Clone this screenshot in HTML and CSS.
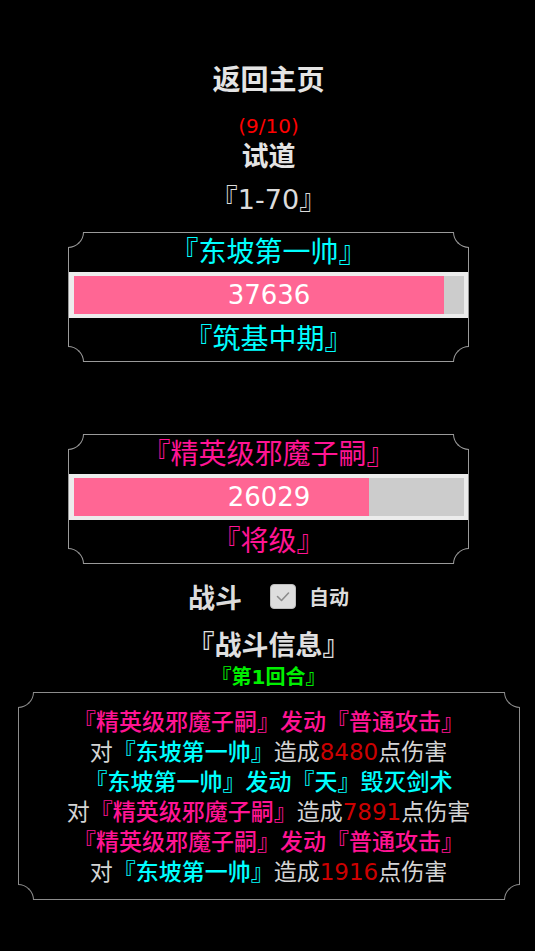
FILE: index.html
```html
<!DOCTYPE html>
<html lang="zh-CN">
<head>
<meta charset="utf-8">
<title>试道</title>
<link rel="stylesheet" href="styles.css">
</head>
<body>
<div class="page">
  <div class="home">返回主页</div>
  <div class="count">(9/10)</div>
  <div class="stage">试道</div>
  <div class="range">『1-70』</div>

  <div class="card cyan">
    <span class="cn tl"></span><span class="cn tr"></span><span class="cn bl"></span><span class="cn br"></span>
    <div class="card-name">『东坡第一帅』</div>
    <div class="strip">
      <div class="track">
        <div class="fill" style="width:94.9%"></div>
        <span class="hp">37636</span>
      </div>
    </div>
    <div class="card-rank">『筑基中期』</div>
  </div>

  <div class="card pink card-enemy">
    <span class="cn tl"></span><span class="cn tr"></span><span class="cn bl"></span><span class="cn br"></span>
    <div class="card-name">『精英级邪魔子嗣』</div>
    <div class="strip">
      <div class="track">
        <div class="fill" style="width:75.6%"></div>
        <span class="hp">26029</span>
      </div>
    </div>
    <div class="card-rank">『将级』</div>
  </div>

  <div class="battle">
    <span class="battle-label">战斗</span>
    <span class="chk">
      <svg viewBox="0 0 26 25" width="26" height="25"><path d="M7.5 12.5 L11.5 16.5 L18.5 9" fill="none" stroke="#8c8c8c" stroke-width="1.6" stroke-linecap="round" stroke-linejoin="round"/></svg>
    </span>
    <span class="auto">自动</span>
  </div>

  <div class="info-title">『战斗信息』</div>
  <div class="round">『第1回合』</div>

  <div class="log">
    <span class="cn tl"></span><span class="cn tr"></span><span class="cn bl"></span><span class="cn br"></span>
    <div class="line"><span class="pk">『精英级邪魔子嗣』发动『普通攻击』</span></div>
    <div class="line">对<span class="cy">『东坡第一帅』</span>造成<span class="rd">8480</span>点伤害</div>
    <div class="line"><span class="cy">『东坡第一帅』发动『天』毁灭剑术</span></div>
    <div class="line">对<span class="pk">『精英级邪魔子嗣』</span>造成<span class="rd">7891</span>点伤害</div>
    <div class="line"><span class="pk">『精英级邪魔子嗣』发动『普通攻击』</span></div>
    <div class="line">对<span class="cy">『东坡第一帅』</span>造成<span class="rd">1916</span>点伤害</div>
  </div>
</div>
</body>
</html>
```

FILE: styles.css
```css
html, body {
  margin: 0;
  padding: 0;
  background: #000;
}

body {
  font-family: "DejaVu Sans", "Noto Sans CJK SC", sans-serif;
  color: #d8d8d8;
}

.page {
  padding: 61px 0 0 2px;
  text-align: center;
}

.home {
  height: 40px;
  line-height: 40px;
  font-size: 28px;
  font-weight: bold;
  color: #e4e4e4;
}

.count {
  margin-top: 12px;
  height: 26px;
  line-height: 26px;
  font-size: 20px;
  color: #ff0000;
}

.stage {
  height: 36px;
  line-height: 36px;
  font-size: 27px;
  font-weight: bold;
  color: #e4e4e4;
}

.range {
  margin-top: 7px;
  height: 36px;
  line-height: 36px;
  font-size: 27px;
  color: #dcdcdc;
}

/* cards */
.card {
  position: relative;
  width: 401px;
  box-sizing: border-box;
  margin: 14px auto 0;
  border: 1px solid #9a9a9a;
}

.card-enemy {
  margin-top: 72px;
}

.cyan { color: #00ffff; }
.pink { color: #ff1493; }

.card-name {
  height: 39px;
  line-height: 39px;
  font-size: 28px;
}

.card-rank {
  height: 43px;
  line-height: 43px;
  font-size: 28px;
}

.strip {
  background: #ececec;
  padding: 4px 4px 4px 5px;
}

.track {
  display: grid;
  height: 38px;
  background: #cccccc;
}

.fill,
.hp {
  grid-area: 1 / 1;
}

.fill {
  height: 100%;
  background: #ff6694;
}

.hp {
  line-height: 38px;
  font-size: 26px;
  color: #ffffff;
  text-align: center;
}

/* scooped corners */
.cn {
  position: absolute;
  width: 15px;
  height: 15px;
  background: #000;
  border: 0 solid #9a9a9a;
}

.tl {
  top: -1px;
  left: -1px;
  border-right-width: 1px;
  border-bottom-width: 1px;
  border-bottom-right-radius: 16px;
}

.tr {
  top: -1px;
  right: -1px;
  border-left-width: 1px;
  border-bottom-width: 1px;
  border-bottom-left-radius: 16px;
}

.bl {
  bottom: -1px;
  left: -1px;
  border-right-width: 1px;
  border-top-width: 1px;
  border-top-right-radius: 16px;
}

.br {
  bottom: -1px;
  right: -1px;
  border-left-width: 1px;
  border-top-width: 1px;
  border-top-left-radius: 16px;
}

/* battle row */
.battle {
  margin-top: 14px;
  height: 36px;
  display: flex;
  justify-content: center;
  align-items: center;
}

.battle-label {
  font-size: 27px;
  font-weight: bold;
  color: #dcdcdc;
  margin-right: 28px;
}

.chk {
  display: block;
  width: 26px;
  height: 25px;
  box-sizing: border-box;
  border: 1px solid #bdbdbd;
  border-radius: 4px;
  background: #dedede;
  margin-right: 13px;
}

.chk svg {
  display: block;
  margin: -1px;
}

.auto {
  font-size: 20px;
  font-weight: bold;
  color: #dcdcdc;
}

.info-title {
  margin-top: 14px;
  height: 36px;
  line-height: 36px;
  font-size: 27px;
  font-weight: bold;
  color: #e0e0e0;
}

.round {
  height: 26px;
  line-height: 26px;
  font-size: 20px;
  font-weight: bold;
  color: #00f000;
}

/* log */
.log {
  position: relative;
  width: 502px;
  box-sizing: border-box;
  margin: 2px auto 0;
  padding: 14px 0 12px;
  border: 1px solid #8c8c8c;
}

.log .cn {
  border-color: #8c8c8c;
}

.line {
  height: 30px;
  line-height: 30px;
  font-size: 23px;
  color: #d4d4d4;
  white-space: nowrap;
}

.pk { color: #ff1493; font-weight: 500; }
.cy { color: #00ffff; font-weight: 500; }
.rd { color: #cc0000; }
```
